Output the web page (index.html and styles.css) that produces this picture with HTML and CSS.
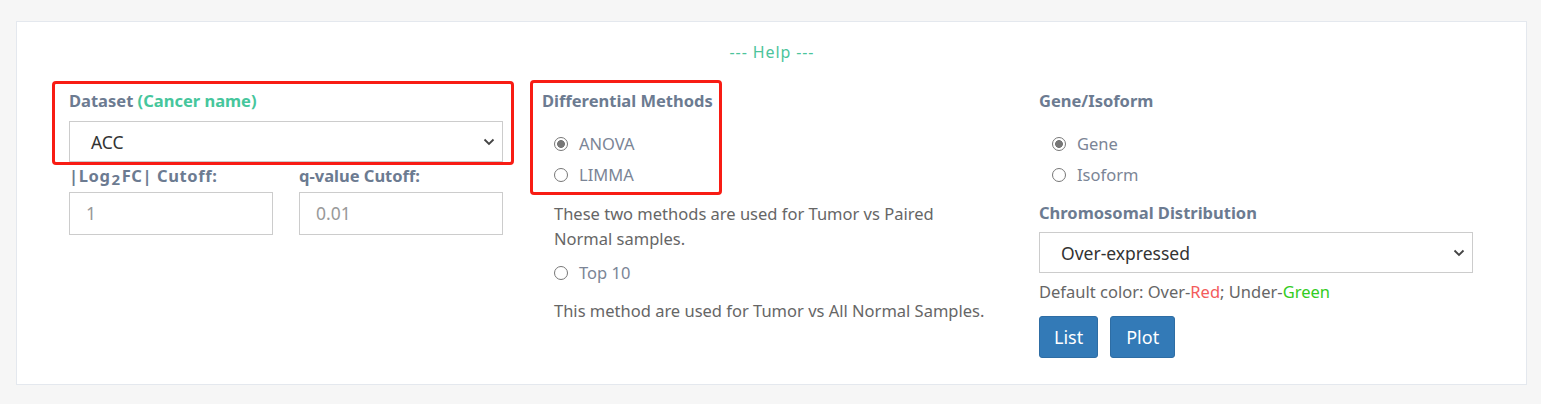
FILE: index.html
```html
<!DOCTYPE html>
<html>
<head>
<meta charset="utf-8">
<link rel="stylesheet" href="styles.css">
</head>
<body>
<div class="card">
  <div class="help">--- Help ---</div>
  <div class="row">
    <div class="col">
      <div class="group">
        <div class="highlight hl-dataset"></div>
        <div class="label">Dataset <span class="accent">(Cancer name)</span></div>
        <div class="select sel-dataset"><span>ACC</span><svg class="chev" width="12" height="8" viewBox="0 0 12 8"><path d="M1.5 1.5 L6 6 L10.5 1.5" fill="none" stroke="#444" stroke-width="1.8"/></svg></div>
      </div>
      <div class="cutoffs">
        <div class="cutoff">
          <div class="label wide">|Log<span class="sub">2</span>FC| Cutoff:</div>
          <div class="input">1</div>
        </div>
        <div class="cutoff">
          <div class="label">q-value Cutoff:</div>
          <div class="input">0.01</div>
        </div>
      </div>
    </div>
    <div class="col">
      <div class="group">
        <div class="highlight hl-methods"></div>
        <div class="label">Differential Methods</div>
        <div class="radios">
          <label class="radio"><span class="dot checked"></span>ANOVA</label>
          <label class="radio"><span class="dot"></span>LIMMA</label>
        </div>
      </div>
      <p class="desc">These two methods are used for Tumor vs Paired<br>Normal samples.</p>
      <label class="radio top10"><span class="dot"></span>Top 10</label>
      <p class="desc last">This method are used for Tumor vs All Normal Samples.</p>
    </div>
    <div class="col">
      <div class="label">Gene/Isoform</div>
      <div class="radios gi">
        <label class="radio"><span class="dot checked"></span>Gene</label>
        <label class="radio"><span class="dot"></span>Isoform</label>
      </div>
      <div class="label chrom">Chromosomal Distribution</div>
      <div class="select sel-chrom"><span>Over-expressed</span><svg class="chev" width="12" height="8" viewBox="0 0 12 8"><path d="M1.5 1.5 L6 6 L10.5 1.5" fill="none" stroke="#444" stroke-width="1.8"/></svg></div>
      <div class="colors">Default color: Over-<span class="red">Red</span>; Under-<span class="green">Green</span></div>
      <div class="buttons">
        <button class="btn">List</button>
        <button class="btn">Plot</button>
      </div>
    </div>
  </div>
</div>
</body>
</html>
```
FILE: styles.css
```css
* { box-sizing: border-box; }
html, body { margin: 0; padding: 0; }
body {
  background: #f6f6f6;
  font-family: "Noto Sans", "Open Sans", Arial, sans-serif;
  font-size: 16.5px;
  color: #666;
  padding: 21px 14px 0 16px;
}
.card {
  background: #fff;
  border: 1px solid #e4e8ee;
  height: 364px;
  padding-top: 20px;
}
.help {
  text-align: center;
  color: #4cc49b;
  font-size: 16px;
  letter-spacing: 0.9px;
  line-height: 20px;
  padding-left: 1px;
}
.row {
  display: grid;
  grid-template-columns: 434px 458px 434px;
  column-gap: 39px;
  padding-left: 52px;
  margin-top: 29px;
}
.col { display: flex; flex-direction: column; }
.group { position: relative; }
.highlight {
  position: absolute;
  border: 3px solid #f81c14;
  border-radius: 4px;
  pointer-events: none;
}
.hl-dataset { left: -17px; top: -10px; right: -11px; bottom: -3px; }
.hl-methods { left: -12px; top: -11px; right: 278px; bottom: -10px; }
.label {
  font-weight: bold;
  color: #6c7b91;
  font-size: 16.5px;
  line-height: 20px;
  white-space: nowrap;
}
.label.wide { letter-spacing: 0.6px; }
.label .sub {
  font-size: 15px;
  vertical-align: -3px;
  line-height: 0;
  margin: 0 1px;
}
.accent { color: #46c69c; }
.select {
  display: flex;
  align-items: center;
  justify-content: space-between;
  border: 1px solid #ccc;
  height: 41px;
  color: #333;
  font-size: 17.5px;
  padding: 0 7px 0 21px;
  background: #fff;
}
.sel-dataset { margin-top: 10px; }
.chev { display: block; }
.cutoffs {
  display: flex;
  gap: 26px;
  margin-top: 4px;
}
.cutoff { width: 204px; }
.input {
  margin-top: 6px;
  height: 43px;
  border: 1px solid #ccc;
  color: #999;
  font-size: 17.5px;
  line-height: 41px;
  padding-left: 16px;
}
.radios {
  display: flex;
  flex-direction: column;
  gap: 11px;
  margin-top: 23px;
  padding-left: 12px;
}
.radio {
  display: flex;
  align-items: center;
  color: #7b8596;
  font-size: 16.5px;
  line-height: 20px;
}
.dot {
  width: 14px;
  height: 14px;
  border: 1px solid #777;
  border-radius: 50%;
  margin-right: 11px;
  background: #fff;
  display: inline-block;
  flex: none;
}
.dot.checked { background: radial-gradient(circle, #777 0 3.6px, #fff 4.2px); }
.desc {
  margin: 16px 0 0 12px;
  line-height: 25px;
  color: #666;
}
.top10 { margin: 12px 0 0 12px; }
.desc.last { margin-top: 15px; }
.gi { padding-left: 13px; }
.chrom { margin-top: 18px; }
.sel-chrom { margin-top: 9px; width: 434px; }
.colors {
  margin-top: 8px;
  line-height: 22px;
  color: #666;
}
.red { color: #f35b5b; }
.green { color: #33cc22; }
.buttons {
  display: flex;
  gap: 12px;
  margin-top: 13px;
}
.btn {
  background: #337ab7;
  color: #fff;
  border: 1px solid #2e6da4;
  border-radius: 3px;
  font-family: inherit;
  font-size: 18px;
  height: 42px;
  padding: 0 14px;
}
.btn + .btn { padding: 0 15px; }
```
